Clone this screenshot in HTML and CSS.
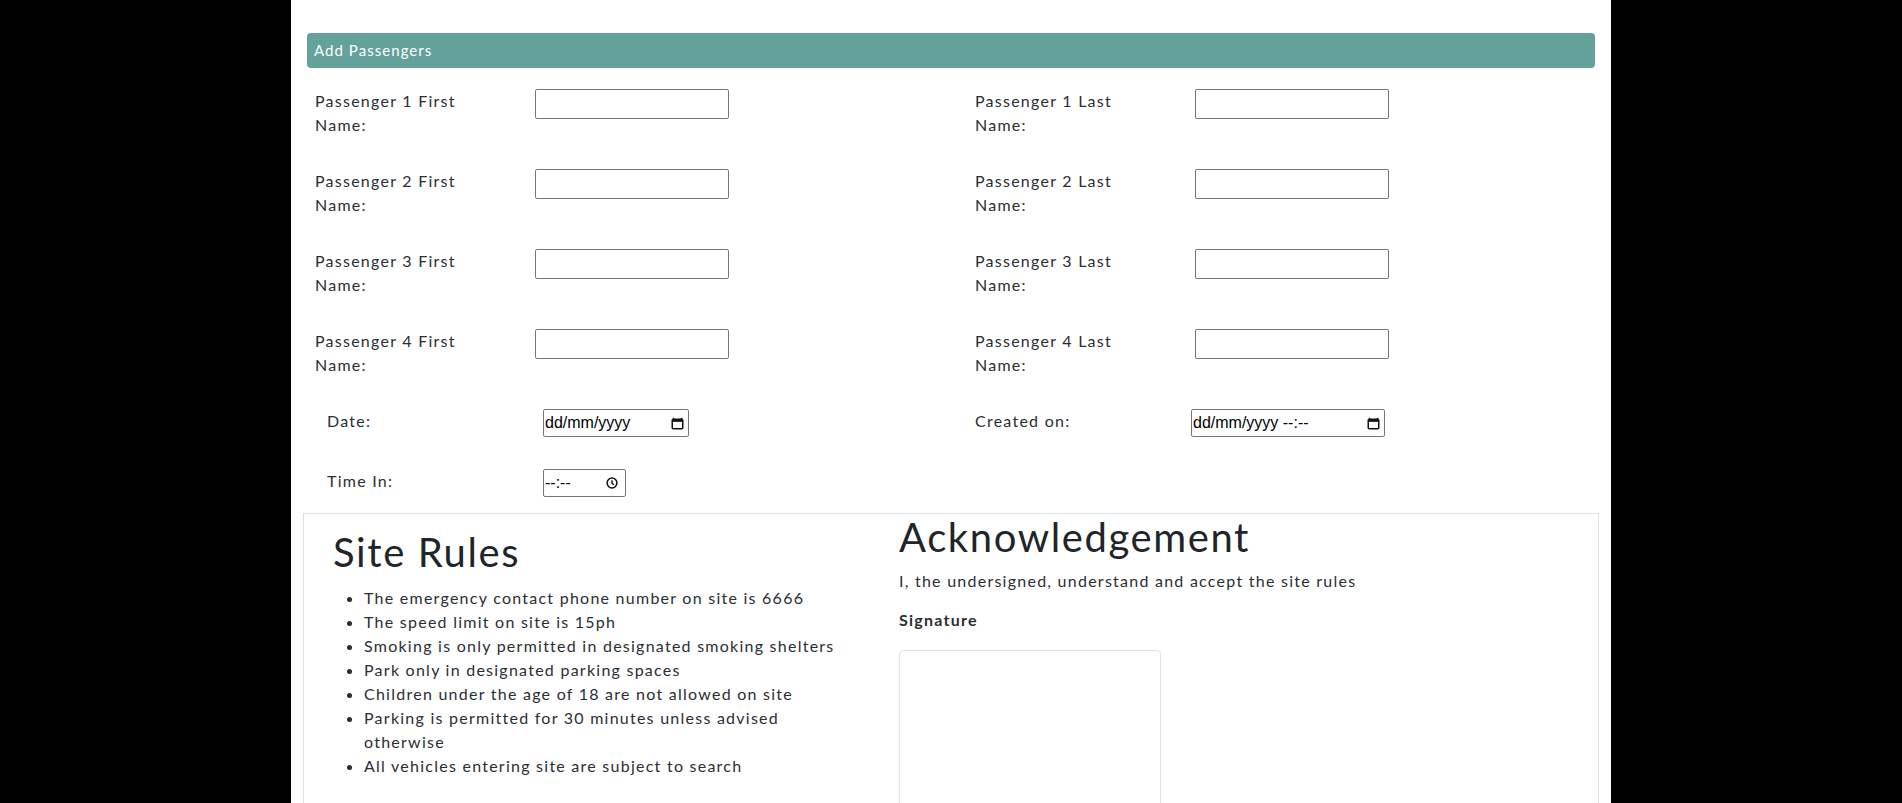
FILE: index.html
```html
<!DOCTYPE html>
<html lang="en-GB">
<head>
<meta charset="utf-8">
<title>Add Passengers</title>
<link rel="stylesheet" href="styles.css">
</head>
<body>
<div class="page">
  <div class="panel-header">Add Passengers</div>

  <div class="form">
    <div class="row">
      <div class="field"><label class="lbl">Passenger 1 First Name:</label><input class="txt" type="text"></div>
      <div class="field"><label class="lbl">Passenger 1 Last Name:</label><input class="txt" type="text"></div>
    </div>
    <div class="row">
      <div class="field"><label class="lbl">Passenger 2 First Name:</label><input class="txt" type="text"></div>
      <div class="field"><label class="lbl">Passenger 2 Last Name:</label><input class="txt" type="text"></div>
    </div>
    <div class="row">
      <div class="field"><label class="lbl">Passenger 3 First Name:</label><input class="txt" type="text"></div>
      <div class="field"><label class="lbl">Passenger 3 Last Name:</label><input class="txt" type="text"></div>
    </div>
    <div class="row">
      <div class="field"><label class="lbl">Passenger 4 First Name:</label><input class="txt" type="text"></div>
      <div class="field"><label class="lbl">Passenger 4 Last Name:</label><input class="txt" type="text"></div>
    </div>
    <div class="row row--short">
      <div class="field field--inset">
        <label class="lbl lbl--tight">Date:</label>
        <div class="dt dt--date" role="textbox"><span class="dt-text">dd/mm/yyyy</span>
          <svg class="dt-icon" width="13" height="13" viewBox="0 0 13 13"><path d="M2.5 0.8v2M10.5 0.8v2" stroke="#111" stroke-width="1.4"/><rect x="1.25" y="2.25" width="10.5" height="9.5" rx="1" fill="none" stroke="#111" stroke-width="1.5"/><rect x="1.25" y="2.25" width="10.5" height="2.6" fill="#111"/></svg>
        </div>
      </div>
      <div class="field">
        <label class="lbl lbl--tight">Created on:</label>
        <div class="dt dt--datetime" role="textbox"><span class="dt-text">dd/mm/yyyy --:--</span>
          <svg class="dt-icon" width="13" height="13" viewBox="0 0 13 13"><path d="M2.5 0.8v2M10.5 0.8v2" stroke="#111" stroke-width="1.4"/><rect x="1.25" y="2.25" width="10.5" height="9.5" rx="1" fill="none" stroke="#111" stroke-width="1.5"/><rect x="1.25" y="2.25" width="10.5" height="2.6" fill="#111"/></svg>
        </div>
      </div>
    </div>
    <div class="row row--short row--last">
      <div class="field field--inset">
        <label class="lbl lbl--tight">Time In:</label>
        <div class="dt dt--time" role="textbox"><span class="dt-text">--:--</span>
          <svg class="dt-icon" width="12" height="12" viewBox="0 0 12 12"><circle cx="6" cy="6" r="4.9" fill="none" stroke="#111" stroke-width="1.5"/><path d="M6 3.2V6.2l2 1.6" fill="none" stroke="#111" stroke-width="1.4"/></svg>
        </div>
      </div>
    </div>
  </div>

  <div class="rules-box">
    <div class="rules-col">
      <h1 class="big-title">Site Rules</h1>
      <ul class="rules-list">
        <li>The emergency contact phone number on site is 6666</li>
        <li>The speed limit on site is 15ph</li>
        <li>Smoking is only permitted in designated smoking shelters</li>
        <li>Park only in designated parking spaces</li>
        <li>Children under the age of 18 are not allowed on site</li>
        <li>Parking is permitted for 30 minutes unless advised otherwise</li>
        <li>All vehicles entering site are subject to search</li>
      </ul>
    </div>
    <div class="ack-col">
      <h1 class="big-title big-title--ack">Acknowledgement</h1>
      <p class="ack-text">I, the undersigned, understand and accept the site rules</p>
      <div class="sig-label">Signature</div>
      <div class="sig-pad"></div>
    </div>
  </div>
</div>
</body>
</html>
```

FILE: styles.css
```css
html, body {
  margin: 0;
  padding: 0;
  background: #000;
}

body {
  font-family: Lato, "Open Sans", sans-serif;
  font-size: 16px;
  line-height: 24px;
  letter-spacing: 1.25px;
  color: #2a2e33;
}

.page {
  width: 1320px;
  box-sizing: border-box;
  margin: 0 auto;
  padding: 33px 12px 0;
  background: #fff;
  min-height: 803px;
}

.panel-header {
  margin: 0 4px;
  height: 35px;
  line-height: 35px;
  padding-left: 7px;
  background: #64a19b;
  border-radius: 4px;
  color: #fff;
  font-size: 15px;
  letter-spacing: 0.07em;
}

.form {
  margin-top: 21px;
}

.row {
  display: grid;
  grid-template-columns: 660px 1fr;
  margin-bottom: 32px;
}

.row--last {
  margin-bottom: 16px;
}

.field {
  display: flex;
  align-items: flex-start;
  padding-left: 12px;
}

.field--inset {
  padding-left: 24px;
}

.lbl {
  flex: 0 0 160px;
  margin-right: 60px;
}

.lbl--tight {
  margin-right: 56px;
}

.txt {
  box-sizing: border-box;
  width: 194px;
  height: 30px;
  margin: 0;
  border: 1px solid #767676;
  border-radius: 2px;
  background: #fff;
}

.dt {
  box-sizing: border-box;
  display: flex;
  align-items: center;
  justify-content: space-between;
  height: 28px;
  padding: 0 4px 0 1px;
  border: 1px solid #767676;
  border-radius: 2px;
  background: #fff;
  font-family: "Liberation Sans", Arial, sans-serif;
  font-size: 16px;
  line-height: 18px;
  letter-spacing: 0;
  color: #000;
}

.dt-text {
  white-space: nowrap;
}

.dt-icon {
  flex: 0 0 auto;
  display: block;
}

.dt--date { width: 146px; }
.dt--datetime { width: 194px; }
.dt--time { width: 83px; padding-right: 7px; }

.rules-box {
  display: flex;
  border: 1px solid #dee2e6;
  min-height: 300px;
}

.rules-col {
  flex: 0 0 595px;
  box-sizing: border-box;
  padding: 18px 0 0 29px;
}

.big-title {
  margin: 0 0 14px;
  font-size: 40px;
  line-height: 40px;
  font-weight: 400;
  letter-spacing: 0.04em;
  color: #212529;
}

.big-title--ack {
  margin-top: 3px;
  margin-bottom: 12px;
}

.rules-list {
  margin: 0;
  padding-left: 31px;
  max-width: 482px;
}

.ack-col {
  flex: 1 1 auto;
}

.ack-text {
  margin: 0 0 15px;
}

.sig-label {
  font-weight: 700;
  margin-bottom: 18px;
}

.sig-pad {
  width: 262px;
  height: 200px;
  box-sizing: border-box;
  border: 1px solid #dee2e6;
  border-radius: 4px;
}
```
